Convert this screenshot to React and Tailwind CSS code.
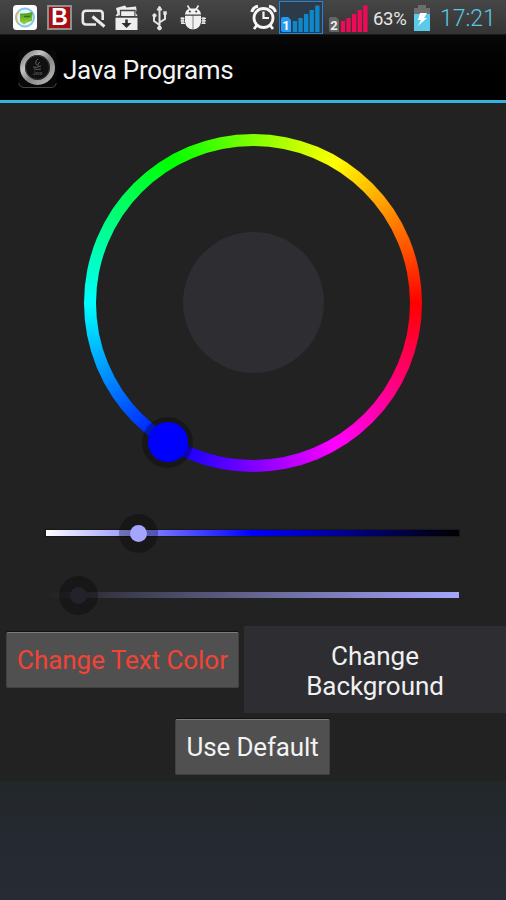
import React from "react";

function NotificationIcons() {
  return (
    <div className="flex h-full items-start">
      {/* globe app */}
      <svg className="ml-[12px] mt-[4px]" width="26" height="26" viewBox="0 0 26 26">
        <defs>
          <linearGradient id="leaf" x1="0" y1="0" x2="0" y2="1">
            <stop offset="0" stopColor="#439c24" />
            <stop offset="1" stopColor="#a3d438" />
          </linearGradient>
        </defs>
        <rect x="1" y="1" width="24" height="25" rx="3.5" fill="#fdfdfd" />
        <circle cx="13" cy="13.500" r="9" fill="#e3f4fb" stroke="#83c5e5" strokeWidth="2" />
        <path d="M6 8 A9 9 0 0 0 6 19" fill="none" stroke="#e5b24d" strokeWidth="1.500" />
        <path d="M8 9.500Q13 10 20.500 8L20 17 Q15 17.500 12 20.500 L8 17.500 Z" fill="url(#leaf)" />
        <path d="M12 12.500h6" stroke="#28751c" strokeWidth="1.500" />
      </svg>
      {/* B badge */}
      <div className="ml-[9px] mt-[5px] flex h-[25px] w-[25px] items-center justify-center border-2 border-[#8d9291] bg-[#a70d12] font-['Liberation_Sans',Arial,sans-serif] text-[23px] leading-none font-bold text-white">
        B
      </div>
      <svg className="ml-[9px] mt-[8px]" width="26" height="22" viewBox="0 0 26 22" fill="none" stroke="#e9e9e9" strokeWidth="2.600">
        <path d="M15 16.500H5Q1.800 16.500 1.800 13.300V6Q1.800 2.800 5 2.800H18.500Q21.700 2.800 21.700 6V12" />
        <path d="M11.500 8.500 23.500 18.500" strokeWidth="3" />
      </svg>
      {/* download archive */}
      <svg className="ml-[8px] mt-[5px]" width="24" height="26" viewBox="0 0 24 26">
        <path d="m1 3 9-2.500 1.500 2L21 1.500l.5 3-1 6H3Z" fill="#ededed" />
        <path d="M5.500 11V5.500H20V11" fill="#ededed" stroke="#444" strokeWidth="1.300" />
        <path d="M.5 12.500h22V25H.5Z" fill="#ededed" />
        <path d="M.5 10.500 3 8v3.500ZM22.500 10.500 20.500 8v3.500Z" fill="#ededed" />
        <path d="M0 12h23" stroke="#444" />
        <path d="M11.500 14.500V20" stroke="#2d2d2d" strokeWidth="2.500" />
        <path d="m6.500 18 5 5 5-5Z" fill="#2d2d2d" />
      </svg>
      {/* USB */}
      <svg className="ml-[13px] mt-[5px]" width="16" height="27" viewBox="0 0 16 27" fill="#e4e4e4" stroke="#e4e4e4">
        <path d="M7.500 4v19M7.500 20 2 16v-5M7.500 17.500 13 14V9" fill="none" strokeWidth="2" />
        <path d="m7.500 1 2.500 4H5Z" />
        <circle cx="2.500" cy="10.500" r="1.700" />
        <path d="M11.500 6.500h3v3h-3z" strokeWidth=".5" />
        <circle cx="7.500" cy="23" r="1.900" />
      </svg>
      {/* debug bug */}
      <svg className="ml-[12px] mt-[5px]" width="27" height="26" viewBox="0 0 27 26" fill="#f1f1f1">
        <path d="M5 9.500Q5.500 4.500 10 3.500h6Q20.500 4.500 21 9.500Z" />
        <path d="m7.500.5 2.500 4M18.500.5 16 4.500" stroke="#f1f1f1" strokeWidth="1.500" />
        <circle cx="9.800" cy="6.500" r="1" fill="#333" />
        <circle cx="16.200" cy="6.500" r="1" fill="#333" />
        <path d="M5 10.800h7.700V24.500Q6 24 5 17ZM13.300 10.800H21V17q-1 7-7.700 7.500Z" />
        <path d="M1 12.300h3v6.500h-3ZM22 12.300h3v6.500h-3Z" fill="#b5b5b5" />
        <path d="M.5 13.300h4M21.500 13.300h4.500M.5 15.800h4M21.500 15.800h4.500M1 18.300h4M21.500 18.300h4" stroke="#e8e8e8" strokeWidth="1.300" />
      </svg>
    </div>
  );
}

function Signal({ sim, bars, tag, ink }) {
  return (
    <svg width="42" height="31" viewBox="0 0 42 31" className="shrink-0">
      <path d="M1 17Q1 15 3 15H8L11 18V30H3Q1 30 1 28Z" fill={tag} />
      <text x="6" y="28" textAnchor="middle" fontSize="13" fontWeight="700" fill={ink} className="font-['Roboto',sans-serif]">{sim}</text>
      <g fill={bars}>
        <rect x="12.800" y="19" width="4.300" height="11" />
        <rect x="18.400" y="16" width="4.300" height="14" />
        <rect x="24" y="12" width="4.300" height="18" />
        <rect x="29.600" y="8" width="4.300" height="22" />
        <rect x="35.200" y="3.500" width="4.300" height="26.500" />
      </g>
    </svg>
  );
}

function StatusBar() {
  return (
    <header className="flex h-[35px] items-start border-b border-[#171b1c] bg-linear-to-b from-[#464646] to-[#343434]">
      <NotificationIcons />
      <svg className="ml-[43px] mt-[4px] shrink-0" width="28" height="27" viewBox="0 0 28 27" fill="none" stroke="#f7f7f7" strokeWidth="2.800">
        <circle cx="13.500" cy="14" r="9.500" />
        <path d="M13.500 7.500V14H19" strokeWidth="2.200" />
        <path d="M1.800 8Q3 3 8 2.300M19 2.300Q24 3 25.500 8" strokeWidth="3" />
        <path d="m7 21-3 4M20 21l3 4" />
      </svg>
      <div className="ml-[1px] mt-[1px] flex h-[33px] w-[44px] shrink-0 border border-[#2484d9] bg-[#2c3b4a]">
        <Signal sim="1" bars="#0e88ca" tag="#279af6" ink="#fff" />
      </div>
      <div className="ml-[5px] mt-[2px] shrink-0">
        <Signal sim="2" bars="#f10958" tag="#656565" ink="#eee" />
      </div>
      <span className="ml-[3px] mt-[8px] w-[36px] shrink-0 text-[18.5px] leading-[22px] tracking-[-0.3px] whitespace-nowrap text-[#e6e6e6]">63%</span>
      <svg className="ml-[5px] mt-[4px] shrink-0" width="16" height="28" viewBox="0 0 16 28">
        <path d="M4 1h8v3h4v6H0V4h4Z" fill="#6d6d6d" />
        <path d="M0 10h16v17H0Z" fill="#5bcae8" />
        <path d="M6 9h7l-3 5h3L4 22l3-6H4Z" fill="#fff" />
      </svg>
      <span className="ml-[10px] mt-[6px] shrink-0 text-[23px] leading-[26px] font-light whitespace-nowrap text-[#5bc9e9]">17:21</span>
    </header>
  );
}

function ActionBar() {
  return (
    <div className="flex h-[68px] items-center border-b-[3px] border-[#35b2e1] bg-linear-to-b from-[#080808] to-black pl-[18px]">
      <svg className="mt-[3px]" width="40" height="40" viewBox="0 0 40 40">
        <defs>
          <linearGradient id="metal" x1="0" y1="0" x2="1" y2="1">
            <stop offset="0" stopColor="#777" />
            <stop offset=".3" stopColor="#c4c4c4" />
            <stop offset=".55" stopColor="#858585" />
            <stop offset="1" stopColor="#bbb" />
          </linearGradient>
        </defs>
        <rect x=".5" y="1" width="38" height="37" rx="4" fill="#080808" />
        <path d="M.5 34Q2 38.500 5 38.500H34Q37 38.500 38.500 34" fill="none" stroke="#444" />
        <circle cx="19.500" cy="18.500" r="15" fill="#101010" stroke="url(#metal)" strokeWidth="5" />
        <circle cx="19.500" cy="18.500" r="12" fill="none" stroke="#393939" strokeWidth="1" />
        <path d="M20 10q-4 3-1 6M22 13q-3 2-2 4M15 18q4 1 8-1M16 20q4 1 7 0" fill="none" stroke="#606060" strokeWidth="1" />
        <text x="19.500" y="25.500" textAnchor="middle" fontSize="4.500" fill="#606060" className="font-['Roboto',sans-serif]">Java</text>
      </svg>
      <h1 className="mt-[4px] ml-[5px] text-[26px] leading-[34px] tracking-[-0.3px] whitespace-nowrap text-[#f3f3f3]">Java Programs</h1>
    </div>
  );
}

function ColorWheel() {
  return (
    <div className="relative mt-[31px] ml-[84px] flex h-[338px] w-[338px] items-center justify-center">
      <div className="flex h-full w-full items-center justify-center rounded-full bg-[conic-gradient(from_90deg,#f00,#f0f_60deg,#00f_120deg,#0ff_180deg,#0f0_240deg,#ff0_300deg,#f00)]">
        <div className="flex h-[314px] w-[314px] items-center justify-center rounded-full bg-[#222222]">
          <div className="mb-px h-[141px] w-[141px] rounded-full bg-[#2d2d32]" />
        </div>
      </div>
      <div className="absolute top-[282.5px] left-[58px] flex h-[51px] w-[51px] items-center justify-center rounded-full bg-black/30">
        <div className="h-[40px] w-[40px] rounded-full bg-[#0000ff]" />
      </div>
    </div>
  );
}

function Slider({ track, halo, knob }) {
  return (
    <div className="relative ml-[46px] flex h-[40px] w-[413px] items-center">
      <div className={`h-[6px] w-full ${track}`} />
      <div className={`absolute top-[0.5px] flex h-[39px] w-[39px] items-center justify-center rounded-full ${halo}`}>
        <div className={`h-[17px] w-[17px] rounded-full ${knob}`} />
      </div>
    </div>
  );
}

const raised =
  "rounded-[2px] border border-[#414141] border-t-[#7c7c7c] bg-[#505050] text-center shadow-[0_-1px_0_#111]";

export default function App() {
  return (
    <div className="flex h-[900px] w-[506px] flex-col overflow-hidden bg-[#222222] font-['Roboto',sans-serif]">
      <StatusBar />
      <ActionBar />
      <main className="h-[678px] shrink-0 bg-[#222222]">
        <ColorWheel />
        <div className="mt-[41px]">
          <Slider
            track="bg-[linear-gradient(to_right,#fff,#00f,#000)] shadow-[0_0_1px_1px_#191919]"
            halo="left-[73px] bg-black/30"
            knob="bg-[#a5a5ff]"
          />
        </div>
        <div className="mt-[22px]">
          <Slider
            track="bg-[linear-gradient(to_right,#a5a5ff00,#a5a5ff)]"
            halo="left-[13px] bg-black/30"
            knob="bg-[#22222b]"
          />
        </div>
        <div className="mt-[11px] flex h-[88px] items-start">
          <button className={`mt-[6px] ml-[6px] h-[56px] w-[233px] text-[26px] leading-[30px] tracking-[-0.05px] whitespace-nowrap text-[#f44336] ${raised}`}>
            Change Text Color
          </button>
          <button className="ml-[5px] h-[87px] w-[262px] bg-[#2d2d32] pt-[2px] text-[26px] leading-[30px] tracking-[-0.05px] text-[#f0f0f0]">
            Change
            <br />
            Background
          </button>
        </div>
        <div className="mt-[5px] flex">
          <button className={`ml-[175px] h-[56px] w-[155px] text-[26px] leading-[30px] tracking-[-0.15px] whitespace-nowrap text-[#f3f3f3] ${raised}`}>
            Use Default
          </button>
        </div>
      </main>
      <div className="grow bg-linear-to-b from-[#22272a] via-[#252931] to-[#272b33]" />
    </div>
  );
}
